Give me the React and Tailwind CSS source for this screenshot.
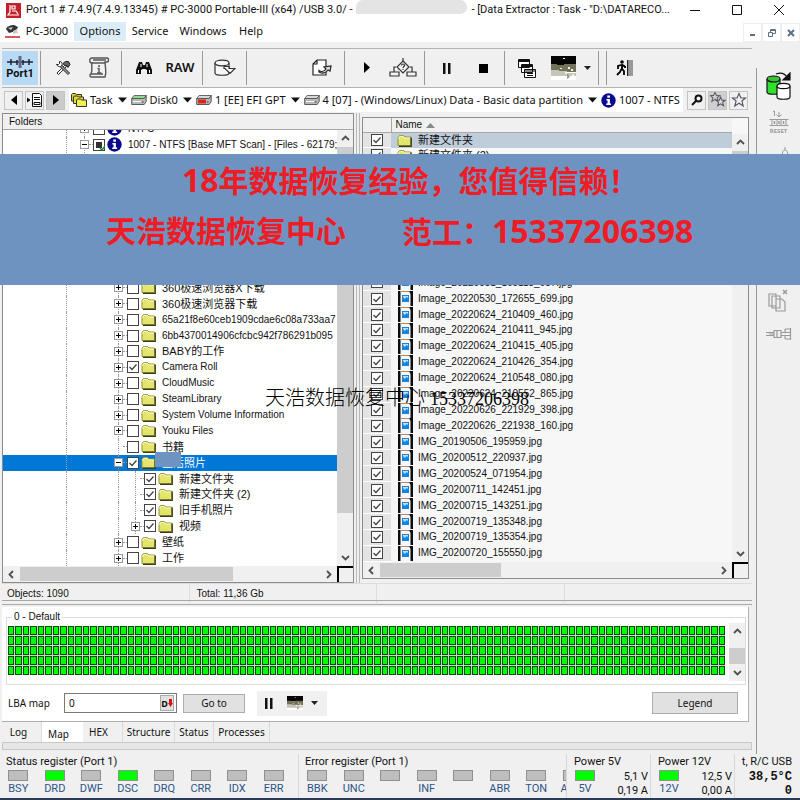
import clsx from "clsx";

const UI = "font-['Noto_Sans','Noto_Sans_CJK_SC',sans-serif]";
const LIST = "font-['Liberation_Sans','Noto_Sans_CJK_SC',sans-serif]";
const CAPTION = "font-[Roboto,'Noto_Sans_CJK_SC',sans-serif]";

const tree = [
    { name: "360极速浏览器X下载", level: 2 },
    { name: "360极速浏览器下载", level: 2 },
    { name: "65a21f8e60ceb1909cdae6c08a733aa7", level: 2 },
    { name: "6bb4370014906cfcbc942f786291b095", level: 2 },
    { name: "BABY的工作", level: 2 },
    { name: "Camera Roll", level: 2, checked: true },
    { name: "CloudMusic", level: 2 },
    { name: "SteamLibrary", level: 2 },
    { name: "System Volume Information", level: 2 },
    { name: "Youku Files", level: 2 },
    { name: "书籍", level: 2, leaf: true },
    { name: "生活照片", level: 2, checked: true, open: true, selected: true },
    { name: "新建文件夹", level: 3, checked: true, leaf: true },
    { name: "新建文件夹 (2)", level: 3, checked: true, leaf: true },
    { name: "旧手机照片", level: 3, checked: true, leaf: true },
    { name: "视频", level: 3, checked: true },
    { name: "壁纸", level: 2 },
    { name: "工作", level: 2 },
];

const files = [
    "Image_20220531_165118_687.jpg",
    "Image_20220530_172655_699.jpg",
    "Image_20220624_210409_460.jpg",
    "Image_20220624_210411_945.jpg",
    "Image_20220624_210415_405.jpg",
    "Image_20220624_210426_354.jpg",
    "Image_20220624_210548_080.jpg",
    "Image_20220624_210552_865.jpg",
    "Image_20220626_221929_398.jpg",
    "Image_20220626_221938_160.jpg",
    "IMG_20190506_195959.jpg",
    "IMG_20200512_220937.jpg",
    "IMG_20200524_071954.jpg",
    "IMG_20200711_142451.jpg",
    "IMG_20200715_143251.jpg",
    "IMG_20200719_135348.jpg",
    "IMG_20200719_135354.jpg",
    "IMG_20200720_155550.jpg",
];

const statusBits = [["BSY"], ["DRD", true], ["DWF"], ["DSC", true], ["DRQ"], ["CRR"], ["IDX"], ["ERR"]];
const errorBits = [["BBK"], ["UNC"], [""], ["INF"], [""], ["ABR"], ["TON"], ["AMN"]];

/* ---------- small drawings ---------- */

function Folder() {
    return (
        <svg width="15" height="13" viewBox="0 0 15 13" className="shrink-0">
            <path d="M1 3.5 2.5 1.5h4L8 3h5.5v8.5H1z" fill="#e3e56c" stroke="#8f9038" />
            <path d="M2 12.3h12.3V3.5" fill="none" stroke="#3c3c10" strokeWidth="1.2" />
            <path d="M2 5V3.4L3 2.3h3L7.3 4H13" fill="none" stroke="#fafbc0" />
        </svg>
    );
}

function Info() {
    return (
        <svg width="15" height="15" viewBox="0 0 15 15" className="shrink-0">
            <circle cx="7.5" cy="7.5" r="7.2" fill="#0a0a8c" />
            <path d="M6.3 2.6h2.6v2.1H6.3zM5.4 6h3.5v4.6h1.2v1.5H5.2v-1.5h1.3V7.4H5.4z" fill="#fff" />
        </svg>
    );
}

function JpgIcon() {
    return (
        <svg width="15" height="15" viewBox="0 0 15 15" className="block">
            <path d="M0 0h15v15H0z" fill="#0c0c0c" />
            <path d="M2.5 0H11l1.500 3v12h-10z" fill="#f4f7fb" />
            <path d="M2.5.5H11" stroke="#b98a5e" />
            <path d="M4 4h7v7H4z" fill="#1b84d8" />
            <path d="M5 5h5v2L8.500 6 7 8 5 6z" fill="#bfe2f8" />
        </svg>
    );
}

function Drive({ color = "#d8d8d8", band }) {
    return (
        <svg width="16" height="12" viewBox="0 0 16 12" className="shrink-0">
            <path d="M3 1.5h12.2l-2 3H.7z" fill={color} stroke="#6a6a6a" />
            <path d="M.7 4.5h12.5l2-3v6l-2 3H.7z" fill="#b9b9b9" stroke="#5a5a5a" />
            <path d="M2 7.500h8" stroke={band || "#f4f4f4"} strokeWidth={band ? 4 : 1} />
            <path d="M11 8h1.5" stroke="#333" />
        </svg>
    );
}

function Caret() {
    return (
        <svg width="9" height="6" viewBox="0 0 9 6" className="mr-px ml-0.5 shrink-0">
            <path d="M0 .5h9L4.5 5.5z" fill="#111" />
        </svg>
    );
}

function Thumb({ className }) {
    return (
        <svg viewBox="0 0 25 24" preserveAspectRatio="none" className={className}>
            <path d="M0 0h25v24H0z" fill="#fff" />
            <path d="M0 0h25v9H0z" fill="#050505" />
            <path d="M0 8h6v1h7v-1h12v8H0z" fill="#74735a" />
            <path d="M0 14h8v1h8v2h9v3H0z" fill="#c4c4b8" />
            <path d="M12 2h2v1h-2zM17 11h2v2h-2zM9 12h2v1H9zM14 16h2v2h-2zM20 13h2v2h-2zM21 18h2v2h-2z" fill="#f3f3e6" />
            <path d="M16 17v6l3-2z" fill="#999" />
        </svg>
    );
}

function Chevron({ dir }) {
    const d = { up: "M1 6 4.5 2.5 8 6", down: "M1 3 4.5 6.5 8 3", left: "M6 1 2.5 4.5 6 8", right: "M3 1 6.5 4.5 3 8" }[dir];
    return (
        <svg width="9" height="9" viewBox="0 0 9 9" className="shrink-0">
            <path d={d} fill="none" stroke="#505050" strokeWidth="1.8" />
        </svg>
    );
}

function Star({ double }) {
    const star = "M8 1.5 9.9 6h4.6l-3.6 3 1.3 5L8 11.2 3.8 14l1.3-5-3.6-3h4.6z";
    return (
        <svg width="16" height="16" viewBox="0 0 16 16">
            {double && <path d={star} fill="none" stroke="#666" transform="translate(-1 -1) scale(.75)" strokeWidth="1.4" />}
            <path d={star} fill={double ? "#ddd" : "none"} stroke="#556" transform={double ? "translate(5 4) scale(.7)" : undefined} strokeWidth={double ? 1.5 : 1.1} />
        </svg>
    );
}

const icons = {
    tools: (
        <svg width="16" height="16" viewBox="0 0 16 16" fill="none" stroke="#222">
            <path d="m2 13 8-8 1.500 1.500-8 8z" fill="#fff" />
            <path d="M8 3.5 10.500 1.500h3l1.500 3-2 3-1-2-2 .5z" fill="#666" />
            <path d="m5 6.500 1.500-1.500 8 8-1.500 1.500z" fill="#999" />
            <path d="M1.500 4.500h2l1-1v-2c2 0 3 1.500 2.500 3.500S3 7.500 1.500 4.500z" fill="#fff" />
        </svg>
    ),
    script: (
        <svg width="22" height="22" viewBox="0 0 22 22" fill="none" stroke="#555" strokeWidth="1.4">
            <path d="M4 1h15c2 0 2 4 0 4h-2c0 5 2 9 0 15H3c-2-1-1-3 0-3 2-5 0-8 1-11-3 0-3-5 0-5z" fill="#f2f2f2" />
            <path d="M5 3h13M4 6h13M3 17h12" />
            <path d="M10 9h2M9.500 11.500H11V16m-2 0h4.500" />
        </svg>
    ),
    find: (
        <svg width="16" height="14" viewBox="0 0 16 14" fill="#111">
            <path d="M3 1h3l1 3h2l1-3h3l3 8v4h-5V9l-2-1H7L5 9v4H0V9z" />
            <path d="M2.500 9v3M13.500 9v3M5 3v3M11 3v3" stroke="#fff" />
        </svg>
    ),
    db: (
        <svg width="22" height="18" viewBox="0 0 22 18" fill="#f8f8f8" stroke="#333" strokeWidth="1.2">
            <path d="M1 4v10c0 3 14 3 14 0V4" />
            <ellipse cx="8" cy="4" rx="7" ry="2.800" />
            <path d="M10 7.500h5v2h6l-5 5-5-5h-1z" />
        </svg>
    ),
    export: (
        <svg width="20" height="18" viewBox="0 0 20 18" fill="#fff" stroke="#222" strokeWidth="1.200">
            <path d="M5 1h9v15H1V5zM5 1v4H1" />
            <path d="M7 11.500c2 1.500 5 1 7-1.500l-2-2 7-1-1 5-2-1c-2 3-6 4-9 2z" fill="#ddd" />
        </svg>
    ),
    play: (
        <svg width="8" height="12" viewBox="0 0 8 12">
            <path d="M1 0v11l6-5.500z" fill="#000" />
        </svg>
    ),
    flow: (
        <svg width="28" height="20" viewBox="0 0 28 20" fill="#f4f4f4" stroke="#333" strokeWidth="1.2">
            <path d="M14 0v3M7 9H5v5M21 9h2v5M1 14h9v4H1zM18 14h9v4h-9z" />
            <path d="m14 3 6 6-6 6-6-6z" />
            <path d="M12.500 7.500c0-2 3-2 3 0 0 1-1.500 1-1.500 2.500m0 1v1" fill="none" />
        </svg>
    ),
    pause: (
        <svg width="8" height="11" viewBox="0 0 8 11">
            <path d="M0 0h2.500v11H0zM5 0h2.500v11H5z" fill="#111" />
        </svg>
    ),
    stop: (
        <svg width="9" height="9" viewBox="0 0 9 9">
            <path d="M0 0h9v9H0z" fill="#000" />
        </svg>
    ),
    windows: (
        <svg width="18" height="19" viewBox="0 0 18 19" fill="#fff" stroke="#111">
            <path d="M.5.500h11v8H.5zM.5 2.500h11M3.500 5.500h11v8h-11zM3.500 7.500h11M6.500 10.500h11v8h-11z" />
            <path d="M6.500 12h11M9 14.500h6M9 16.500h6M1 1.500h10M4 6.500h10" />
        </svg>
    ),
    exit: (
        <svg width="18" height="16" viewBox="0 0 18 16">
            <circle cx="6" cy="2" r="1.800" fill="#000" />
            <path d="M6 4v5l2 2v4M5.500 9 4 12l-3 3M5 5 2 6v3M7 5l2 2h1" fill="none" stroke="#000" strokeWidth="1.800" />
            <path d="M11 0h1.500v16H11z" fill="#222" />
            <path d="M13 0h4v16h-4z" fill="#999" />
        </svg>
    ),
};

/* ---------- controls ---------- */

function Check({ id, checked, label, partial }) {
    return (
        <span className="relative block size-3 shrink-0">
            <input
                id={id}
                type="checkbox"
                aria-label={label}
                defaultChecked={checked}
                className="block size-3 appearance-none border border-[#444] bg-white"
            />
            <svg viewBox="0 0 12 12" className="pointer-events-none absolute inset-0 size-3">
                {checked && <path d="m2.500 6 2.500 2.500 4.500-5" fill="none" stroke="#444" strokeWidth="1.300" />}
                {partial && <path d="M3 3h6v6H3z" fill="#333" />}
                {partial && <path d="m7 9 2 2 3-4" fill="none" stroke="#1b8a1b" strokeWidth="1.500" />}
            </svg>
        </span>
    );
}

function Guide({ children }) {
    return (
        <span className="relative flex w-[9px] shrink-0 items-center justify-center self-stretch before:absolute before:inset-y-0 before:left-1 before:border-l before:border-dotted before:border-[#999]">
            {children}
        </span>
    );
}

function Expander({ open }) {
    return (
        <button aria-label={open ? "Collapse" : "Expand"} className="relative block size-[9px] border border-[#999] bg-white">
            <svg viewBox="0 0 7 7" className="block size-[7px]">
                <path d={open ? "M1 3.500h5" : "M1 3.500h5M3.500 1v5"} stroke="#000" />
            </svg>
        </button>
    );
}

function TreeRow({ node, icon, partial }) {
    const { name, level, checked, open, leaf, selected } = node;
    const id = "node-" + name;
    return (
        <li className={clsx("flex items-center overflow-hidden", selected && "bg-[#0078d7] text-white")}>
            <span className="w-16 shrink-0 self-stretch border-r border-dotted border-[#999]" />
            <span className={clsx("shrink-0", level === 1 ? "w-[13px]" : "w-[47px]")} />
            {level === 3 && <Guide />}
            {level === 3 && <span className="w-2 shrink-0" />}
            <Guide>{!leaf && <Expander open={open} />}</Guide>
            <span className="w-1 shrink-0 border-t border-dotted border-[#999]" />
            <Check id={id} checked={checked} partial={partial} />
            <label htmlFor={id} className="ml-0.5 flex items-center gap-1.5 whitespace-nowrap">
                {icon || <Folder />}
                <span className={/[\u4e00-\u9fff]/.test(name) ? "text-[11px]" : "text-[10px]"}>{name}</span>
            </label>
        </li>
    );
}

function HScroll({ thumb }) {
    return (
        <div className="flex h-4 shrink-0 bg-[#f0f0f0]">
            <div className="flex flex-1 items-center justify-between px-1">
                <Chevron dir="left" />
                <span className="mx-1 flex h-[14px] flex-1">
                    <span className={clsx("h-full bg-[#cdcdcd]", thumb)} />
                </span>
                <Chevron dir="right" />
            </div>
            <span className="w-4 border-t-2 border-l-2 border-black bg-[#f0f0f0]" />
        </div>
    );
}

function VScroll({ children }) {
    return (
        <div className="flex w-4 shrink-0 flex-col items-center bg-[#f0f0f0] py-1">
            <Chevron dir="up" />
            {children}
            <Chevron dir="down" />
        </div>
    );
}

function ToolGroup({ className, children }) {
    return <div className={clsx("flex shrink-0 items-center border-r border-[#999]", children && "px-1", className)}>{children}</div>;
}

function Tool({ label, children }) {
    return (
        <button aria-label={label} className="flex h-full w-9 shrink-0 items-center justify-center">
            {children}
        </button>
    );
}

/* ---------- page parts ---------- */

function TitleBar() {
    return (
        <header className={clsx("flex h-5 shrink-0 items-center bg-white pl-1.5 text-[11px] whitespace-nowrap", CAPTION)}>
            <svg width="15" height="15" viewBox="0 0 15 15" className="shrink-0">
                <path d="M0 0h15v15H0z" fill="#c4202a" />
                <path d="M4 2v7l-2 3h11M6 3h3v3H6zM6 8h4l2 3" fill="none" stroke="#fff" strokeWidth="1.200" />
            </svg>
            <span className="ml-[5px]">Port 1 # 7.4.9(7.4.9.13345) # PC-3000 Portable-III (x64) /USB 3.0/ -</span>
            <span className="ml-1 h-[14px] min-w-0 flex-1 self-start rounded-tl-lg rounded-r-lg bg-[#e4e4e4]" />
            <span className="ml-1">- [Data Extractor : Task - "D:\DATARECO...</span>
            <div className="ml-1 flex shrink-0">
                <button aria-label="Minimize" className="flex w-[42px] items-center justify-center">
                    <svg width="10" height="10" stroke="#111"><path d="M0 5.500h10" /></svg>
                </button>
                <button aria-label="Maximize" className="flex w-[42px] items-center justify-center">
                    <svg width="10" height="10" stroke="#111" fill="none"><path d="M.5.500h9v9h-9z" /></svg>
                </button>
                <button aria-label="Close" className="flex w-[42px] items-center justify-center">
                    <svg width="10" height="10" stroke="#111"><path d="m0 0 10 10M10 0 0 10" /></svg>
                </button>
            </div>
        </header>
    );
}

function MenuBar() {
    return (
        <nav className="flex h-[22px] shrink-0 items-center bg-white pl-[5px] text-[11px]">
            <svg width="15" height="14" viewBox="0 0 15 14" className="shrink-0">
                <path d="M1 5c1-3 5-4 8-4l4 2-2 4-7 2z" fill="#333" />
                <path d="m3 4 5-1-2 3zM8 7l4-2 1 4-5 1z" fill="#ccc" />
                <path d="M0 13h15" stroke="#d02020" strokeWidth="1.500" />
            </svg>
            <button className="w-[54px]">PC-3000</button>
            <button className="h-[19px] w-[52px] bg-[#dcedfa]">Options</button>
            <button className="w-[48px]">Service</button>
            <button className="w-[58px]">Windows</button>
            <button className="w-[38px]">Help</button>
            <div className="ml-auto flex self-end text-[#5c6f86]">
                <button aria-label="Minimize child" className="flex h-[19px] w-[19px] items-center justify-center border border-[#eee]">
                    <svg width="8" height="8" stroke="currentColor" strokeWidth="2"><path d="M1 6h5" /></svg>
                </button>
                <button aria-label="Restore child" className="flex h-[19px] w-[19px] items-center justify-center border border-[#eee]">
                    <svg width="8" height="8" stroke="currentColor" fill="none"><path d="M.5 3.500h4v4h-4zM2.500 3V.500h5v4H5M2.500 1.500h5" /></svg>
                </button>
                <button aria-label="Close child" className="flex h-[19px] w-[19px] items-center justify-center border border-[#eee]">
                    <svg width="8" height="8" stroke="currentColor" strokeWidth="2"><path d="m1 1 6 6M7 1 1 7" /></svg>
                </button>
            </div>
        </nav>
    );
}

function Toolbar() {
    return (
        <div className="mt-1.5 flex h-10 shrink-0 items-stretch border-t border-b border-[#b4b4b4] py-0.5">
            <button className={clsx("flex w-9 flex-col items-center justify-center bg-[#b9daf5] text-[11px] leading-3 font-bold", CAPTION)}>
                <svg width="26" height="12" viewBox="0 0 26 12" stroke="#223" strokeWidth="1.500">
                    <path d="M0 6h26" />
                    <path d="M4 3v6M22 3v6M10 4v5M16 4v5" />
                    <path d="M13 0v12" stroke="#668" strokeWidth="3" />
                </svg>
                Port1
            </button>
            <ToolGroup className="w-[3px]" />
            <ToolGroup className="w-[81px]">
                <Tool label="Utilities">{icons.tools}</Tool>
                <Tool label="Script">{icons.script}</Tool>
            </ToolGroup>
            <ToolGroup className="w-[81px]">
                <Tool label="Find">{icons.find}</Tool>
                <Tool label="Raw recovery">
                    <span className="text-[13px] font-semibold">RAW</span>
                </Tool>
            </ToolGroup>
            <ToolGroup className="w-11">
                <Tool label="Save map">{icons.db}</Tool>
            </ToolGroup>
            <ToolGroup className="w-[98px] justify-end">
                <Tool label="Export">{icons.export}</Tool>
            </ToolGroup>
            <ToolGroup className="w-20">
                <Tool label="Start">{icons.play}</Tool>
                <Tool label="Conditions">{icons.flow}</Tool>
            </ToolGroup>
            <ToolGroup className="w-20">
                <Tool label="Pause">{icons.pause}</Tool>
                <Tool label="Stop">{icons.stop}</Tool>
            </ToolGroup>
            <ToolGroup className="w-[94px]">
                <Tool label="Cascade">{icons.windows}</Tool>
                <Tool label="Map view">
                    <Thumb className="h-6 w-[25px]" />
                </Tool>
                <button aria-label="Map view options" className="w-4">
                    <svg width="8" height="4" className="mx-auto"><path d="M0 0h7L3.500 4z" fill="#222" /></svg>
                </button>
            </ToolGroup>
            <ToolGroup className="w-2" />
            <Tool label="Exit">{icons.exit}</Tool>
        </div>
    );
}

function PathBar() {
    const box = "flex size-[19px] shrink-0 items-center justify-center border border-[#c4c4c4]";
    return (
        <div className="mb-px flex h-6 shrink-0 items-center text-[11px]">
            <div className="flex gap-0.5 pl-0.5">
                <button aria-label="Back" className={box}>
                    <svg width="6" height="10"><path d="M6 0v10L0 5z" /></svg>
                </button>
                <button aria-label="History" className={box}>
                    <svg width="16" height="14" viewBox="0 0 16 14" fill="#fff" stroke="#111">
                        <path d="M5.500.500h7l2 2v11h-9zM7 4.500h6M7 6.500h6M7 9.500h6v2H7z" />
                        <path d="M0 5v4l3-2z" fill="#111" />
                    </svg>
                </button>
                <button aria-label="Forward" className={clsx(box, "bg-[#cbcbcb]")}>
                    <svg width="6" height="10"><path d="M0 0v10l6-5z" /></svg>
                </button>
            </div>
            <div className="ml-1 flex h-full min-w-0 flex-1 items-center gap-[3px] overflow-hidden bg-white pl-0.5 whitespace-nowrap">
                <svg width="16" height="14" viewBox="0 0 16 14" stroke="#333" className="shrink-0">
                    <path d="M.5 8V1.500l1-1h3l1 1h5V8z" fill="#d6cf2a" />
                    <path d="M2.500 10.500V4l1-1h3l1 1h5v6.500z" fill="#e4dc32" />
                    <path d="M5.500 13.500V7l1-1h3l1 1h5v6.500z" fill="#f4ee55" />
                </svg>
                Task <Caret />
                <Drive color="#8ddc8d" /> Disk0 <Caret />
                <Drive band="#d22" /> 1 [EE] EFI GPT <Caret />
                <Drive /> 4 [07] - (Windows/Linux) Data - Basic data partition <Caret />
                <Info /> 1007 - NTFS
            </div>
            <div className="ml-1 flex gap-0.5 pr-1">
                <button aria-label="Search" className={box}>
                    <svg width="12" height="12" fill="none" stroke="#111" strokeWidth="2"><circle cx="7.500" cy="4.500" r="3" /><path d="m5 7-4 4" /></svg>
                </button>
                <button aria-label="Bookmarks" className={clsx(box, "bg-[#cfcfcf]")}><Star double /></button>
                <button aria-label="Add bookmark" className={box}><Star /></button>
            </div>
        </div>
    );
}

function FoldersPanel() {
    return (
        <section className={clsx("flex w-[352px] shrink-0 flex-col border border-[#8c8c8c] bg-white", LIST)}>
            <h2 className="h-4 shrink-0 border-b border-[#a8a8a8] bg-[#f0f0f0] pl-1.5 text-[10px] leading-4">Folders</h2>
            <div className="flex min-h-0 flex-1">
                <div className="flex min-w-0 flex-1 flex-col justify-end overflow-hidden">
                    <ul className="grid h-[445px] shrink-0 auto-rows-fr leading-[14px]">
                        <TreeRow node={{ name: "NTFS", level: 1 }} icon={<Info />} />
                        <TreeRow
                            node={{ name: "1007 - NTFS [Base MFT Scan] - [Files - 62179;", level: 1, open: true }}
                            icon={<Info />}
                            partial
                        />
                        <li className="row-span-8" />
                        {tree.map((node, i) => (
                            <TreeRow key={i} node={node} />
                        ))}
                    </ul>
                </div>
                <VScroll>
                    <span className="my-1 w-full flex-1">
                        <span className="block h-[91%] bg-[#cdcdcd]" />
                    </span>
                </VScroll>
            </div>
            <HScroll thumb="w-[71%]" />
        </section>
    );
}

function FilesPanel() {
    const cell = "w-7 border-b border-white bg-[#e4e4e4] p-0";
    return (
        <section className={clsx("mt-1 mb-1 flex min-w-0 flex-1 flex-col border border-[#8c8c8c] bg-[#f7f7f7]", LIST)}>
            <div className="flex min-h-0 flex-1">
                <table className="h-full min-w-0 flex-1 border-collapse text-left leading-[14px]">
                    <thead>
                        <tr className="border-b border-[#a8a8a8] bg-[#f0f0f0] text-[10px]">
                            <th aria-label="Selected" className="w-7 border-r border-[#a8a8a8] p-0" />
                            <th className="p-0 pl-1 font-normal" colSpan="2">
                                Name
                                <svg width="9" height="5" className="ml-1 inline-block"><path d="M4.500 0 9 5H0z" fill="#888" /></svg>
                            </th>
                        </tr>
                    </thead>
                    <tbody>
                        {["新建文件夹", "新建文件夹 (2)"].map((name, i) => (
                            <tr key={name} className={clsx("text-[11px]", i === 0 && "bg-[#bfcddb]")}>
                                <td className={cell}><div className="flex justify-center"><Check checked label={name} /></div></td>
                                <td className="w-[27px] p-0 pl-1.5"><Folder /></td>
                                <td className="p-0">{name}</td>
                            </tr>
                        ))}
                        {Array.from({ length: 7 }, (_, i) => (
                            <tr key={i}>
                                <td className={cell} colSpan="3"><div className="h-[14px]" /></td>
                            </tr>
                        ))}
                        {files.map((name) => (
                            <tr key={name} className="text-[10px]">
                                <td className={cell}><div className="flex justify-center"><Check checked label={name} /></div></td>
                                <td className="w-[27px] p-0 pl-[7px]"><JpgIcon /></td>
                                <td className="p-0 whitespace-nowrap">{name}</td>
                            </tr>
                        ))}
                    </tbody>
                </table>
                <div className="mt-4 flex">
                    <VScroll>
                        <span className="my-1 w-full flex-1">
                            <span className="block h-20 bg-[#cdcdcd]" />
                        </span>
                    </VScroll>
                </div>
            </div>
            <HScroll thumb="w-[36%]" />
        </section>
    );
}

function MapPanel() {
    return (
        <section className="mr-[3px] flex h-[115px] shrink-0 flex-col border-r border-b border-[#b0b0b0] bg-white pt-1 text-[10px]">
            <fieldset className="mr-0.5 ml-1 flex h-[74px] items-start border border-[#dcdcdc] pl-px">
                <legend className={clsx("ml-1 px-0.5 leading-3", LIST)}>0 - Default</legend>
                <div className="mt-[3px] grid flex-1 grid-cols-[repeat(96,minmax(0,1fr))] gap-px bg-[#c8d8c8]">
                    {Array.from({ length: 480 }, (_, i) => (
                        <i key={i} className="h-[9px] border border-[#0a4a0a] bg-[#00ff00]" />
                    ))}
                </div>
                <div className="ml-1 flex h-[58px]">
                    <VScroll>
                        <span className="flex w-full flex-1 items-end">
                            <span className="mb-1 block h-4 w-full bg-[#cdcdcd]" />
                        </span>
                    </VScroll>
                </div>
            </fieldset>
            <div className="flex h-9 items-center pr-2.5 pl-1.5">
                <label htmlFor="lba" className="w-14">LBA map</label>
                <div className="flex h-5 w-[113px] items-center border border-[#7a7a7a]">
                    <input id="lba" type="text" defaultValue="0" className="w-0 flex-1 pl-1 outline-none" />
                    <button aria-label="Decimal" className="mr-0.5 flex h-4 w-[14px] items-center justify-center border border-[#aaa] bg-[#e1e1e1] text-[9px] leading-none font-bold">
                        D<svg width="5" height="8"><path d="M1 0h3v4h1L2.500 8 0 4h1z" fill="#d11" /></svg>
                    </button>
                </div>
                <button className="ml-1.5 h-[19px] w-[62px] border border-[#adadad] bg-[#e1e1e1]">Go to</button>
                <div className="ml-3 flex h-[25px] items-center gap-3.5 bg-[#f0f0f0] px-2">
                    <button aria-label="Pause map">{icons.pause}</button>
                    <button aria-label="Map style"><Thumb className="h-[14px] w-4" /></button>
                    <button aria-label="Map options" className="-ml-1.5">
                        <svg width="8" height="4"><path d="M0 0h7L3.500 4z" fill="#222" /></svg>
                    </button>
                </div>
                <button className="ml-auto h-[22px] w-[86px] border border-[#adadad] bg-[#e1e1e1]">Legend</button>
            </div>
        </section>
    );
}

function Tabs() {
    const tab = "h-full border-r border-[#dcdcdc]";
    return (
        <div role="tablist" className="flex h-5 shrink-0 items-center pl-0.5 text-[10px]">
            <button role="tab" className={clsx(tab, "w-[38px] pr-2")}>Log</button>
            <button role="tab" aria-selected="true" className="h-full w-[41px] bg-white pt-1 pr-2">Map</button>
            <button role="tab" className={clsx(tab, "w-10 pr-2")}>HEX</button>
            <button role="tab" className={clsx(tab, "w-[52px]")}>Structure</button>
            <button role="tab" className={clsx(tab, "w-[39px]")}>Status</button>
            <button role="tab" className={clsx(tab, "w-[56px]")}>Processes</button>
        </div>
    );
}

function Lamp({ on }) {
    return <span className={clsx("block h-[11px] w-5 shrink-0 border border-[#909090]", on ? "bg-[#00ff00]" : "bg-[#bebebe]")} />;
}

function Register({ title, bits, className }) {
    return (
        <section className={clsx("flex shrink-0 flex-col overflow-hidden border-r border-[#d8d8d8]", className)}>
            <h2 className="pl-1.5 leading-4">{title}</h2>
            <div className="grid w-[292px] grid-cols-8">
                {bits.map(([name, on], i) => (
                    <div key={i} className="flex flex-col items-center leading-4 text-[#2f5487]">
                        <Lamp on={on} />
                        {name}
                    </div>
                ))}
            </div>
        </section>
    );
}

function Power({ title, volts, reading, amps }) {
    return (
        <section className="w-[84px] shrink-0 border-r border-[#d8d8d8] pr-0.5">
            <h2 className="pl-[7px] leading-4">{title}</h2>
            <div className="flex justify-between pl-2">
                <div className="flex flex-col items-center leading-4 text-[#2f5487]">
                    <Lamp on />
                    {volts}
                </div>
                <div className="text-right leading-[14px]">
                    <p>{reading}</p>
                    <p>{amps}</p>
                </div>
            </div>
        </section>
    );
}

function SideBar() {
    return (
        <aside className="mt-[26px] ml-1 flex w-11 shrink-0 flex-col items-center border-l border-[#999] text-[#9a9a9a]">
            <button aria-label="Copy disk" className="mt-1">
                <svg width="26" height="30" viewBox="0 0 26 30" stroke="#111" strokeWidth="1.200">
                    <path d="M1 7v13c0 3 13 3 13 0V7" fill="#2fe02f" />
                    <ellipse cx="7.500" cy="7" rx="6.500" ry="3" fill="#35c435" />
                    <path d="M11 14v11c0 3 13 3 13 0V14" fill="#fff" />
                    <ellipse cx="17.500" cy="14" rx="6.500" ry="2.600" fill="#fff" />
                    <path d="M10 2c5-2 9 0 11 3" fill="none" />
                    <path d="M24 1v7h-7z" fill="#111" />
                </svg>
            </button>
            <button aria-label="Reset" className="mt-2 flex flex-col items-center text-[6px] leading-2 font-bold">
                <svg width="20" height="17" viewBox="0 0 20 17" fill="none" stroke="currentColor">
                    <path d="M4 1.500 5.500 1v5M10 2v5M7.500 4.500 10 7l2.500-2.500M.5 9.500h19M.5 15.500h19M3 10v5M8 10v5M12 10v5M17 10v5" />
                    <path d="M5.500 11v3M10 11v3M14.500 11v3" strokeWidth="1.500" />
                </svg>
                RESET
            </button>
            <button aria-label="Unlock" className="mt-3 ml-3">
                <svg width="8" height="16" fill="none" stroke="currentColor"><path d="M4 0v3M1.500 12V6c0-4 5-4 5 0v6z" /></svg>
            </button>
            <button aria-label="Clear copies" className="mt-[126px]">
                <svg width="22" height="24" viewBox="0 0 22 24" fill="#f0f0f0" stroke="currentColor" strokeWidth="1.200">
                    <path d="M1 5h7v12H1zM4 7h8v12H4zM8 10h6l3 3v9H8z" />
                    <path d="m15 1 4 4m0-4-4 4" strokeWidth="1.500" />
                </svg>
            </button>
            <button aria-label="Connector" className="mt-3.5">
                <svg width="26" height="14" viewBox="0 0 26 14" fill="none" stroke="currentColor" strokeWidth="1.200">
                    <path d="M0 5.500h8M0 8.500h8M3 7h5M8 3.500h7v7H8zM11 3.500v7M15 5.500h4V2M15 8.500h4V12M19 5.500h5M19 8.500h5M24.500 1v12M19 2h5M19 12h5" />
                </svg>
            </button>
        </aside>
    );
}

export default function App() {
    return (
        <div className={clsx("relative flex h-screen min-h-[600px] flex-col overflow-hidden bg-[#f0f0f0] text-[#111]", UI)}>
            <TitleBar />
            <MenuBar />
            <div className="flex min-h-0 flex-1">
                <main className="flex min-w-0 flex-1 flex-col pl-0.5">
                    <Toolbar />
                    <PathBar />
                    <div className="flex min-h-0 flex-1 pr-[3px]">
                        <FoldersPanel />
                        <span className="mx-0.5 w-1 border-x border-[#b8b8b8]" />
                        <FilesPanel />
                    </div>
                    <div className={clsx("grid h-[17px] shrink-0 grid-cols-4 border-t border-[#dcdcdc] text-[10px] leading-[19px]", LIST)}>
                        <p className="border-r border-[#dcdcdc] pl-[5px]">Objects: 1090</p>
                        <p className="border-r border-[#dcdcdc] pl-[7px]">Total: 11,36 Gb</p>
                        <p className="border-r border-[#dcdcdc]" />
                        <p />
                    </div>
                    <div className="mb-0.5 h-[5px] shrink-0 border-y border-[#a8a8a8]" />
                    <MapPanel />
                    <Tabs />
                    <div className="mb-1 h-2 shrink-0 border border-[#c8c8c8] bg-[#e6e6e6]" />
                </main>
                <SideBar />
            </div>
            <footer className={clsx("flex h-[46px] shrink-0 border-b-2 border-[#2b3a55] text-[11px]", CAPTION)}>
                <Register title="Status register (Port 1)" bits={statusBits} className="w-[299px]" />
                <Register title="Error register (Port 1)" bits={errorBits} className="min-w-0 flex-1 shrink" />
                <Power title="Power 5V" volts="5V" reading="5,1 V" amps="0,19 A" />
                <Power title="Power 12V" volts="12V" reading="12,5 V" amps="0,00 A" />
                <section className="w-[65px] shrink-0 pr-2 text-right">
                    <h2 className="leading-4 whitespace-nowrap">t, R/C USB</h2>
                    <p className="font-['Liberation_Mono',monospace] text-[12px] leading-[14px] font-bold">38,5°C</p>
                    <p className="font-['Liberation_Mono',monospace] text-[12px] leading-[14px] font-bold">0</p>
                </section>
            </footer>

            <span className="absolute top-[452px] left-[155px] h-[15px] w-[26px] bg-[#6f93c0]" />
            <p className="absolute top-[384px] left-[265px] font-['Liberation_Serif','Noto_Sans_CJK_SC',serif] text-[20px] leading-7 font-light whitespace-nowrap text-black">
                天浩数据恢复中心 <span className="text-[18px]">15337206398</span>
            </p>
            <div className="absolute inset-x-0 top-[154px] h-[131px] bg-[#6f93c0] pt-px text-[30px] leading-[50px] font-bold whitespace-nowrap text-[#ee1c25]">
                <p className="pl-[182px]"><span className="text-[32px]">18</span>年数据恢复经验，您值得信赖！</p>
                <p className="flex gap-14 pl-[106px]">
                    <span>天浩数据恢复中心</span>
                    <span>范工：<span className="text-[32px]">15337206398</span></span>
                </p>
            </div>
        </div>
    );
}
